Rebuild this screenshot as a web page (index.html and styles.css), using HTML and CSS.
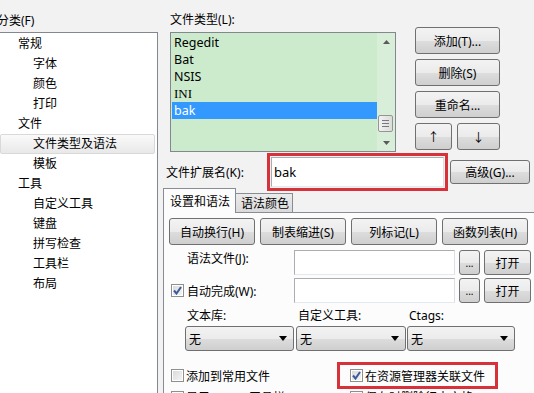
FILE: index.html
```html
<!DOCTYPE html>
<html lang="zh-CN">
<head>
  <meta charset="UTF-8" />
  <title>文件类型及语法</title>
  <link rel="stylesheet" href="styles.css">
</head>
<body>
<div class="window">

  <aside class="categories">
    <div class="caption">分类(F)</div>
    <ul class="tree">
      <li class="lv1">常规</li>
      <li class="lv2">字体</li>
      <li class="lv2">颜色</li>
      <li class="lv2">打印</li>
      <li class="lv1">文件</li>
      <li class="lv2 selected">文件类型及语法</li>
      <li class="lv2">模板</li>
      <li class="lv1">工具</li>
      <li class="lv2">自定义工具</li>
      <li class="lv2">键盘</li>
      <li class="lv2">拼写检查</li>
      <li class="lv2">工具栏</li>
      <li class="lv2">布局</li>
    </ul>
  </aside>

  <main class="settings">
    <div class="types">
      <div class="types-col">
        <div class="caption">文件类型(L):</div>
        <div class="listbox">
          <ul class="items">
            <li>Regedit</li>
            <li>Bat</li>
            <li>NSIS</li>
            <li class="serif">INI</li>
            <li class="sel">bak</li>
          </ul>
          <div class="scrollbar">
            <div class="sb-arrow">
              <svg width="7" height="4" viewBox="0 0 7 4"><path d="M0 4 L3.5 0 L7 4 Z" fill="#5a5a5a"/></svg>
            </div>
            <div class="sb-track">
              <div class="sb-thumb"><i></i><i></i><i></i></div>
            </div>
            <div class="sb-arrow">
              <svg width="7" height="4" viewBox="0 0 7 4"><path d="M0 0 L7 0 L3.5 4 Z" fill="#5a5a5a"/></svg>
            </div>
          </div>
        </div>
      </div>
      <div class="type-buttons">
        <div class="btn">添加(T)...</div>
        <div class="btn">删除(S)</div>
        <div class="btn">重命名...</div>
        <div class="arrow-btns">
          <div class="btn up">↑</div>
          <div class="btn down">↓</div>
        </div>
      </div>
    </div>

    <div class="ext-row">
      <div class="ext-label">文件扩展名(K):</div>
      <div class="mark ext-mark">
        <div class="field ext-field">bak</div>
      </div>
      <div class="btn adv">高级(G)...</div>
    </div>

    <div class="tabs">
      <div class="tab active">设置和语法</div>
      <div class="tab">语法颜色</div>
    </div>

    <div class="panel">
      <div class="cmd-row">
        <div class="btn cmd">自动换行(H)</div>
        <div class="btn cmd">制表缩进(S)</div>
        <div class="btn cmd">列标记(L)</div>
        <div class="btn cmd">函数列表(H)</div>
      </div>

      <div class="file-row">
        <div class="row-label indent">语法文件(J):</div>
        <div class="field path"></div>
        <div class="btn dots">...</div>
        <div class="btn open">打开</div>
      </div>

      <div class="file-row second">
        <div class="row-label check">
          <span class="cb checked"><svg width="9" height="9" viewBox="0 0 9 9"><path d="M1 4.5 L3.5 7.5 L8 1" fill="none" stroke="#3b5a9a" stroke-width="2"/></svg></span>
          自动完成(W):
        </div>
        <div class="field path"></div>
        <div class="btn dots">...</div>
        <div class="btn open">打开</div>
      </div>

      <div class="combo-grid">
        <div class="combo-label">文本库:</div>
        <div class="combo-label">自定义工具:</div>
        <div class="combo-label">Ctags:</div>
        <div class="combo w1">无<svg width="8" height="5" viewBox="0 0 8 5"><path d="M0 0 L8 0 L4 5 Z" fill="#000"/></svg></div>
        <div class="combo w2">无<svg width="8" height="5" viewBox="0 0 8 5"><path d="M0 0 L8 0 L4 5 Z" fill="#000"/></svg></div>
        <div class="combo w3">无<svg width="8" height="5" viewBox="0 0 8 5"><path d="M0 0 L8 0 L4 5 Z" fill="#000"/></svg></div>
      </div>

      <div class="opt-row">
        <div class="opt first"><span class="cb"></span>添加到常用文件</div>
        <div class="opt mark opt-mark">
          <span class="cb checked"><svg width="9" height="9" viewBox="0 0 9 9"><path d="M1 4.5 L3.5 7.5 L8 1" fill="none" stroke="#3b5a9a" stroke-width="2"/></svg></span>在资源管理器关联文件
        </div>
      </div>
      <div class="opt-row last">
        <div class="opt first"><span class="cb"></span>显示 HTML 工具栏</div>
        <div class="opt second-col"><span class="cb"></span>保存时删除行末空格</div>
      </div>
    </div>
  </main>

</div>
</body>
</html>
```

FILE: styles.css
```css
html, body {
  height: 393px;
  overflow: hidden;
}

body {
  margin: 0;
  font-family: "Noto Sans", "Noto Sans CJK SC", sans-serif;
  font-size: 12px;
  color: #000;
  background: #f2f2f2;
}

.window {
  display: flex;
  height: 420px;
}

/* left tree */
.categories {
  width: 159px;
  margin-left: -1px;
  flex: none;
  display: flex;
  flex-direction: column;
  padding-top: 11px;
  box-sizing: border-box;
}

.caption {
  line-height: 20px;
  white-space: nowrap;
}

.categories .caption {
  margin-left: -2px;
  margin-bottom: 1px;
}

.tree {
  flex: 1;
  list-style: none;
  margin: 0;
  padding: 1px 0 0;
  background: #fff;
  border: 1px solid #828790;
}

.tree li {
  height: 20px;
  line-height: 20px;
  white-space: nowrap;
  box-sizing: border-box;
}

.lv1 {
  padding-left: 18px;
}

.lv2 {
  padding-left: 33px;
}

.tree .selected {
  line-height: 18px;
  padding-left: 32px;
  margin-right: 2px;
  border: 1px solid #d9d9d9;
  border-radius: 2px;
  background: linear-gradient(#fafafa, #e8e8e8);
}

/* right side */
.settings {
  flex: 1;
  min-width: 0;
  padding-top: 10px;
}

.types {
  display: flex;
  margin-left: 12px;
}

.types-col {
  width: 226px;
}

.types .caption {
  margin-bottom: 2px;
}

.listbox {
  display: flex;
  height: 120px;
  box-sizing: border-box;
  border: 1px solid #828790;
  background: #cbebcc;
}

.items {
  flex: 1;
  list-style: none;
  margin: 0;
  padding: 1px 0 0 1px;
}

.items li {
  height: 17px;
  line-height: 17px;
  padding-left: 2px;
  font-size: 12.5px;
}

.items .serif {
  font-family: "Liberation Serif", serif;
  font-size: 13px;
}

.items .sel {
  background: #3399ff;
  color: #fff;
}

.scrollbar {
  width: 18px;
  display: flex;
  flex-direction: column;
  background: #d9eed9;
}

.sb-arrow {
  height: 17px;
  display: flex;
  align-items: center;
  justify-content: center;
}

.sb-track {
  flex: 1;
}

.sb-thumb {
  margin: 65px 2px 0 1px;
  height: 17px;
  box-sizing: border-box;
  border: 1px solid #959595;
  border-radius: 2px;
  background: linear-gradient(90deg, #f2f2f2, #dcdcdc);
  display: flex;
  flex-direction: column;
  align-items: center;
  justify-content: center;
  gap: 2px;
}

.sb-thumb i {
  display: block;
  width: 7px;
  height: 1px;
  background: #7a7a7a;
}

.type-buttons {
  width: 85px;
  margin-left: 19px;
  margin-top: 17px;
  display: flex;
  flex-direction: column;
  gap: 5px;
}

.btn {
  height: 27px;
  box-sizing: border-box;
  border: 1px solid #707070;
  border-radius: 3px;
  background: linear-gradient(#f3f3f3 0%, #ebebeb 50%, #dddddd 51%, #cfcfcf 100%);
  display: flex;
  align-items: center;
  justify-content: center;
  white-space: nowrap;
}

.arrow-btns {
  display: flex;
  gap: 5px;
}

.up {
  width: 37px;
}

.down {
  width: 43px;
}

/* extension row */
.ext-row {
  display: flex;
  align-items: center;
  height: 38px;
  margin-top: 1px;
  margin-left: 8px;
}

.ext-label {
  width: 101px;
}

.mark {
  border: 3px solid #d7323a;
  box-sizing: border-box;
}

.ext-mark {
  width: 181px;
  height: 38px;
  padding: 1px;
}

.field {
  background: #fff;
  border: 1px solid #abadb3;
  border-right-color: #dbdfe6;
  border-bottom-color: #e3e9ef;
  box-sizing: border-box;
}

.ext-field {
  height: 100%;
  padding-left: 2px;
  display: flex;
  align-items: center;
  font-size: 13px;
}

.adv {
  width: 80px;
  height: 24px;
  margin-left: 2px;
}

/* tabs */
.tabs {
  display: flex;
  align-items: flex-end;
  height: 25px;
  margin: -3px 0 -1px 5px;
  position: relative;
  z-index: 1;
}

.tab {
  height: 19px;
  margin-bottom: 1px;
  padding-left: 5px;
  width: 57px;
  box-sizing: border-box;
  border: 1px solid #898c95;
  border-left: none;
  border-bottom: none;
  background: linear-gradient(#ebebeb, #dadada);
  line-height: 19px;
}

.tab.active {
  width: 73px;
  height: 25px;
  margin-bottom: 0;
  padding-left: 6px;
  border-left: 1px solid #898c95;
  background: #fcfcfc;
  line-height: 25px;
}

.panel {
  width: 380px;
  height: 200px;
  margin-left: 5px;
  box-sizing: border-box;
  border: 1px solid #898c95;
  background: #fcfcfc;
  padding: 5px 0 0 5px;
}

.cmd-row {
  display: flex;
  gap: 5px;
}

.cmd {
  width: 86px;
}

.file-row {
  display: flex;
  align-items: center;
  height: 25px;
  margin-top: 5px;
}

.file-row.second {
  margin-top: 3px;
}

.row-label {
  width: 125px;
  box-sizing: border-box;
  display: flex;
  align-items: center;
}

.row-label.indent {
  padding-left: 18px;
  align-self: flex-start;
  line-height: 18px;
}

.row-label.check {
  padding-left: 2px;
  gap: 3px;
}

.path {
  width: 161px;
  height: 25px;
}

.dots {
  width: 21px;
  height: 25px;
  margin-left: 4px;
  font-size: 10px;
}

.open {
  width: 47px;
  height: 25px;
  margin-left: 4px;
}

.cb {
  width: 13px;
  height: 13px;
  flex: none;
  box-sizing: border-box;
  border: 1px solid #8e8f8f;
  background: linear-gradient(135deg, #d8d8d8, #f6f6f6);
  box-shadow: inset 0 0 0 1px #fff;
  display: inline-flex;
  align-items: center;
  justify-content: center;
}

.combo-grid {
  display: grid;
  grid-template-columns: 111px 111px 108px;
  grid-template-rows: 20px 25px;
  margin: 3px 0 0 16px;
}

.combo-label {
  padding-left: 2px;
  line-height: 20px;
}

.combo {
  height: 25px;
  box-sizing: border-box;
  border: 1px solid #707070;
  border-radius: 3px;
  background: linear-gradient(#f3f3f3 0%, #ebebeb 50%, #dddddd 51%, #cfcfcf 100%);
  display: flex;
  align-items: center;
  justify-content: space-between;
  padding: 0 6px 0 3px;
}

.w1 {
  width: 109px;
}

.w2 {
  width: 110px;
}

.w3 {
  width: 108px;
}

.opt-row {
  display: flex;
  align-items: center;
  height: 27px;
  margin-top: 11px;
}

.opt-row.last {
  height: 20px;
  margin-top: -2px;
}

.opt {
  display: flex;
  align-items: center;
  gap: 2px;
  white-space: nowrap;
}

.opt.first {
  width: 168px;
  padding-left: 2px;
  box-sizing: border-box;
}

.opt-mark {
  width: 161px;
  height: 27px;
  padding-left: 10px;
}

.second-col {
  padding-left: 13px;
}
```
